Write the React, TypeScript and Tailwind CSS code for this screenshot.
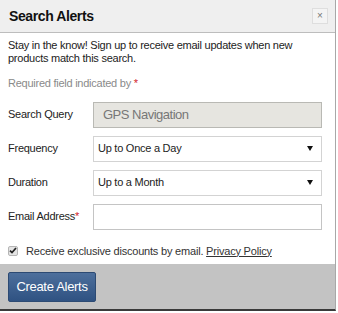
import React from 'react';

const Caret = () => (
  <svg width="6" height="5" viewBox="0 0 6 5" className="shrink-0">
    <path d="M0 0 H6 L3 5 Z" fill="#111" />
  </svg>
);

const Row = ({ label, required, children }: { label: string; required?: boolean; children: React.ReactNode }) => (
  <div className="flex items-center h-[26px]">
    <div className="w-[85px] shrink-0 text-[11px] tracking-[-0.25px] text-[#222]">
      {label}
      {required && <span className="text-[#d2232a]">*</span>}
    </div>
    <div className="flex-1">{children}</div>
  </div>
);

export default function App() {
  return (
    <div className="w-[338px] h-[313px] bg-white font-['Liberation_Sans',Arial,sans-serif]">
      <div className="w-[336px] h-[311px] flex flex-col border-r border-[#a8a8a8] border-b-2 border-b-[#3a3a3a]">
        {/* header */}
        <div className="h-[33px] shrink-0 bg-[#efefef] border-b border-[#bdbdbd] flex items-center justify-between pl-[9px] pr-[7px]">
          <h2 className="text-[14px] tracking-[-0.4px] font-bold text-[#111]">Search Alerts</h2>
          <button className="w-[16px] h-[16px] border border-[#dedede] bg-[#f4f4f4] flex items-center justify-center text-[10px] leading-none text-[#777]">
            ×
          </button>
        </div>

        {/* body */}
        <div className="flex-1 px-[8px] pt-[6px]">
          <p className="text-[11px] leading-[13px] tracking-[-0.25px] text-[#222] pr-[20px]">
            Stay in the know! Sign up to receive email updates when new products match this search.
          </p>
          <p className="mt-[10px] text-[11px] tracking-[-0.25px] text-[#8a8a8a]">
            Required field indicated by <span className="text-[#d2232a]">*</span>
          </p>

          <div className="mt-[10px] flex flex-col gap-[8px] pr-[5px]">
            <Row label="Search Query">
              <div className="h-[26px] border border-[#b9b9b4] bg-[#e6e5e0] flex items-center px-[9px] text-[13px] tracking-[-0.5px] text-[#777]">
                GPS Navigation
              </div>
            </Row>
            <Row label="Frequency">
              <div className="h-[26px] border border-[#d3d3d3] bg-white flex items-center justify-between pl-[4px] pr-[8px] text-[11px] tracking-[-0.25px] text-[#222]">
                Up to Once a Day <Caret />
              </div>
            </Row>
            <Row label="Duration">
              <div className="h-[26px] border border-[#d3d3d3] bg-white flex items-center justify-between pl-[4px] pr-[8px] text-[11px] tracking-[-0.25px] text-[#222]">
                Up to a Month <Caret />
              </div>
            </Row>
            <Row label="Email Address" required>
              <input className="w-full h-[26px] border border-[#c4c4c4] bg-white outline-none" />
            </Row>
          </div>

          <label className="mt-[13px] flex items-center gap-[8px] text-[11px] tracking-[-0.2px] text-[#333]">
            <span className="w-[10px] h-[10px] rounded-[2px] border border-[#b5b5b5] bg-[#e4e4e4] flex items-center justify-center">
              <svg width="8" height="7" viewBox="0 0 8 7">
                <path d="M1 3.6 L3 5.6 L7 1" stroke="#222" strokeWidth="1.7" fill="none" />
              </svg>
            </span>
            <span>
              Receive exclusive discounts by email. <a href="#" className="underline text-[#333]">Privacy Policy</a>
            </span>
          </label>
        </div>

        {/* footer */}
        <div className="h-[45px] shrink-0 bg-[#c3c3c3] flex items-center px-[8px]">
          <button className="w-[88px] h-[30px] rounded-[2px] border border-[#2c4a73] bg-gradient-to-b from-[#4d6f9c] to-[#2f5282] text-white text-[13px] tracking-[-0.3px]">
            Create Alerts
          </button>
        </div>
      </div>
    </div>
  );
}
